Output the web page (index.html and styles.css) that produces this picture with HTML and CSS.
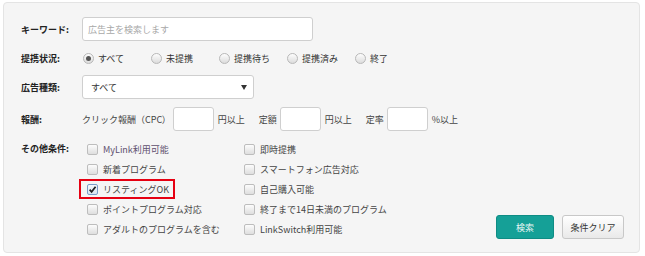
FILE: index.html
```html
<!DOCTYPE html>
<html lang="ja">
<head>
<meta charset="utf-8">
<link rel="stylesheet" href="styles.css">
</head>
<body>
<div class="panel">
  <div class="row r-keyword">
    <div class="label">キーワード:</div>
    <div class="input kw"><span class="ph">広告主を検索します</span></div>
  </div>
  <div class="row r-status">
    <div class="label">提携状況:</div>
    <div class="radios">
      <span class="opt"><span class="radio on"></span>すべて</span>
      <span class="opt"><span class="radio"></span>未提携</span>
      <span class="opt"><span class="radio"></span>提携待ち</span>
      <span class="opt"><span class="radio"></span>提携済み</span>
      <span class="opt"><span class="radio"></span>終了</span>
    </div>
  </div>
  <div class="row r-type">
    <div class="label">広告種類:</div>
    <div class="input select"><span>すべて</span><span class="arrow"></span></div>
  </div>
  <div class="row r-reward">
    <div class="label">報酬:</div>
    <span class="txt">クリック報酬（CPC<span class="palt">）</span></span>
    <div class="input small i1"></div>
    <span class="txt unit">円以上</span>
    <span class="txt kind">定額</span>
    <div class="input small i2"></div>
    <span class="txt unit">円以上</span>
    <span class="txt kind">定率</span>
    <div class="input small i2"></div>
    <span class="txt unit">%以上</span>
  </div>
  <div class="row r-other">
    <div class="label other-label">その他条件:</div>
    <div class="checks">
      <span class="chk"><span class="box"></span><span class="mylink">MyLink利用可能</span></span>
      <span class="chk"><span class="box"></span>即時提携</span>
      <span class="chk"><span class="box"></span>新着プログラム</span>
      <span class="chk"><span class="box"></span>スマートフォン広告対応</span>
      <span class="chk hl"><span class="box on"><svg viewBox="0 0 10 10" width="9" height="9"><path d="M1.8 5.2 L4 7.6 L8.4 2" fill="none" stroke="#222" stroke-width="1.9"/></svg></span>リスティングOK</span>
      <span class="chk"><span class="box"></span>自己購入可能</span>
      <span class="chk"><span class="box"></span>ポイントプログラム対応</span>
      <span class="chk"><span class="box"></span>終了まで14日未満のプログラム</span>
      <span class="chk"><span class="box"></span>アダルトのプログラムを含む</span>
      <span class="chk"><span class="box"></span>LinkSwitch利用可能</span>
    </div>
    <div class="buttons">
      <span class="btn primary">検索</span>
      <span class="btn">条件クリア</span>
    </div>
  </div>
</div>
</body>
</html>
```
FILE: styles.css
```css
html, body {
  margin: 0;
  padding: 0;
  background: #ffffff;
}
body {
  font-family: "Noto Sans CJK JP", "Noto Sans", sans-serif;
  font-size: 9px;
  color: #444;
}
.panel {
  margin: 2px 5px 3px 3px;
  height: 251px;
  box-sizing: border-box;
  background: #f5f5f5;
  border: 1px solid #e4e4e4;
  border-radius: 4px;
  padding: 14px 15px 0 17px;
}
.row {
  display: flex;
  align-items: center;
}
.label {
  width: 61px;
  flex: none;
  font-weight: bold;
  color: #222;
}
.input {
  background: #fff;
  border: 1px solid #cfcfcf;
  border-radius: 3px;
  box-sizing: border-box;
  height: 24px;
}
.kw {
  width: 231px;
  display: flex;
  align-items: center;
  padding-left: 5px;
}
.ph { color: #a8a8a8; }
.r-keyword { height: 24px; }
.r-status { height: 24px; margin-top: 5px; }
.r-type { height: 24px; margin-top: 5px; }
.r-reward { height: 24px; margin-top: 8px; }
.r-other { margin-top: 8px; align-items: flex-start; }
.other-label { line-height: 20px; }
.radios { display: flex; }
.opt {
  width: 68px;
  display: flex;
  align-items: center;
  color: #333;
}
.radio {
  width: 9px;
  height: 9px;
  border: 1px solid #b8b8b8;
  border-radius: 50%;
  background: linear-gradient(#fdfdfd, #dcdcdc);
  margin: 0 4px 0 1px;
  position: relative;
  flex: none;
}
.radio.on::after {
  content: "";
  position: absolute;
  left: 2px; top: 2px;
  width: 5px; height: 5px;
  border-radius: 50%;
  background: #555;
}
.select {
  width: 172px;
  display: flex;
  align-items: center;
  justify-content: space-between;
  padding: 0 6px 0 8px;
  color: #333;
}
.arrow {
  width: 0; height: 0;
  border-left: 3px solid transparent;
  border-right: 3px solid transparent;
  border-top: 5px solid #333;
}
.txt { color: #444; }
.palt { font-feature-settings: "palt"; }
.small { width: 41px; }
.i1 { margin-left: 6px; }
.i2 { margin-left: 3px; }
.unit { margin-left: 4px; }
.kind { margin-left: 14px; }
.checks {
  display: grid;
  grid-template-columns: 157px 200px;
  grid-auto-rows: 20px;
}
.chk {
  display: flex;
  align-items: center;
  padding-left: 5px;
  color: #444;
  position: relative;
}
.mylink { color: #5e4f6e; }
.box {
  width: 9px;
  height: 9px;
  border: 1px solid #bdbdbd;
  border-radius: 2px;
  background: linear-gradient(#fcfcfc, #dedede);
  margin-right: 5px;
  flex: none;
  display: flex;
  align-items: center;
  justify-content: center;
}
.box.on {
  border-color: #7a9cc8;
  background: linear-gradient(#f4f8fc, #d8e4f0);
}
.hl::after {
  content: "";
  position: absolute;
  left: -3px;
  top: 0;
  width: 92px;
  height: 16px;
  border: 2px solid #e60012;
}
.buttons {
  margin-left: auto;
  align-self: flex-end;
  display: flex;
  gap: 8px;
}
.btn {
  height: 24px;
  box-sizing: border-box;
  border-radius: 3px;
  display: flex;
  align-items: center;
  justify-content: center;
  border: 1px solid #c8c8c8;
  background: linear-gradient(#ffffff, #e9e9e9);
  color: #333;
  width: 62px;
}
.btn.primary {
  width: 58px;
  background: #15a097;
  border-color: #0e8c84;
  color: #e8f6f4;
}
```
